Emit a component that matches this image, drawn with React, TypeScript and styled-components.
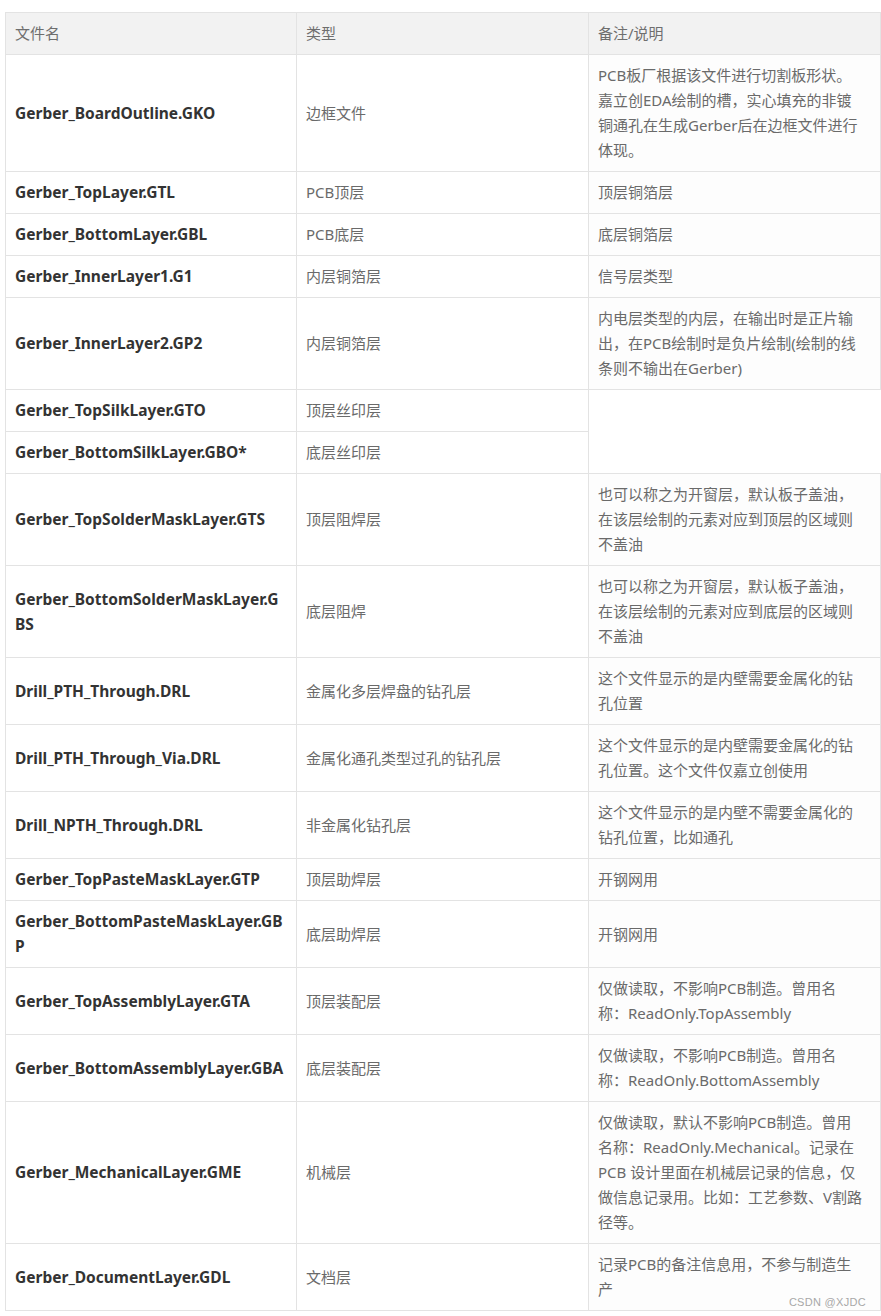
import styled, { createGlobalStyle } from 'styled-components';

const GlobalStyle = createGlobalStyle`
  html, body {
    margin: 0;
    padding: 0;
    background: #ffffff;
  }
  body {
    font-family: "Noto Sans", "Noto Sans CJK SC", sans-serif;
  }
`;

const Page = styled.div`
  position: relative;
  width: 881px;
  padding: 12px 0 4px 5px;
  box-sizing: border-box;
`;

const Table = styled.table`
  width: 875px;
  table-layout: fixed;
  border-collapse: collapse;
`;

const Cell = styled.td`
  border: 1px solid #e3e3e3;
  padding: 8px 9px;
  font-size: 15px;
  line-height: 25px;
  color: #6a6a6a;
  vertical-align: middle;
  text-align: left;
  word-break: break-all;
`;

const HeadCell = styled(Cell).attrs({ as: 'th' })`
  background: #f2f2f2;
  font-weight: normal;
  color: #6e6e6e;
`;

const NameCell = styled(Cell)`
  font-size: 15.5px;
  font-weight: 700;
  color: #333333;
`;

const NoteCell = styled(Cell)`
  background: #fdfdfd;
`;

const Watermark = styled.span`
  position: absolute;
  right: 15px;
  bottom: 7px;
  font-size: 11px;
  letter-spacing: 0.3px;
  color: #a8a8a8;
  font-family: "Liberation Sans", "Noto Sans CJK SC", sans-serif;
`;

type Row = { name: string; type: string; note?: string[] };

const rows: Row[] = [
  {
    name: 'Gerber_BoardOutline.GKO',
    type: '边框文件',
    note: ['PCB板厂根据该文件进行切割板形状。', '嘉立创EDA绘制的槽，实心填充的非镀', '铜通孔在生成Gerber后在边框文件进行', '体现。'],
  },
  { name: 'Gerber_TopLayer.GTL', type: 'PCB顶层', note: ['顶层铜箔层'] },
  { name: 'Gerber_BottomLayer.GBL', type: 'PCB底层', note: ['底层铜箔层'] },
  { name: 'Gerber_InnerLayer1.G1', type: '内层铜箔层', note: ['信号层类型'] },
  {
    name: 'Gerber_InnerLayer2.GP2',
    type: '内层铜箔层',
    note: ['内电层类型的内层，在输出时是正片输', '出，在PCB绘制时是负片绘制(绘制的线', '条则不输出在Gerber)'],
  },
  { name: 'Gerber_TopSilkLayer.GTO', type: '顶层丝印层' },
  { name: 'Gerber_BottomSilkLayer.GBO*', type: '底层丝印层' },
  {
    name: 'Gerber_TopSolderMaskLayer.GTS',
    type: '顶层阻焊层',
    note: ['也可以称之为开窗层，默认板子盖油，', '在该层绘制的元素对应到顶层的区域则', '不盖油'],
  },
  {
    name: 'Gerber_BottomSolderMaskLayer.GBS',
    type: '底层阻焊',
    note: ['也可以称之为开窗层，默认板子盖油，', '在该层绘制的元素对应到底层的区域则', '不盖油'],
  },
  {
    name: 'Drill_PTH_Through.DRL',
    type: '金属化多层焊盘的钻孔层',
    note: ['这个文件显示的是内壁需要金属化的钻', '孔位置'],
  },
  {
    name: 'Drill_PTH_Through_Via.DRL',
    type: '金属化通孔类型过孔的钻孔层',
    note: ['这个文件显示的是内壁需要金属化的钻', '孔位置。这个文件仅嘉立创使用'],
  },
  {
    name: 'Drill_NPTH_Through.DRL',
    type: '非金属化钻孔层',
    note: ['这个文件显示的是内壁不需要金属化的', '钻孔位置，比如通孔'],
  },
  { name: 'Gerber_TopPasteMaskLayer.GTP', type: '顶层助焊层', note: ['开钢网用'] },
  { name: 'Gerber_BottomPasteMaskLayer.GBP', type: '底层助焊层', note: ['开钢网用'] },
  {
    name: 'Gerber_TopAssemblyLayer.GTA',
    type: '顶层装配层',
    note: ['仅做读取，不影响PCB制造。曾用名', '称：ReadOnly.TopAssembly'],
  },
  {
    name: 'Gerber_BottomAssemblyLayer.GBA',
    type: '底层装配层',
    note: ['仅做读取，不影响PCB制造。曾用名', '称：ReadOnly.BottomAssembly'],
  },
  {
    name: 'Gerber_MechanicalLayer.GME',
    type: '机械层',
    note: [
      '仅做读取，默认不影响PCB制造。曾用',
      '名称：ReadOnly.Mechanical。记录在',
      'PCB 设计里面在机械层记录的信息，仅',
      '做信息记录用。比如：工艺参数、V割路',
      '径等。',
    ],
  },
  {
    name: 'Gerber_DocumentLayer.GDL',
    type: '文档层',
    note: ['记录PCB的备注信息用，不参与制造生', '产'],
  },
];

export default function App() {
  return (
    <>
      <GlobalStyle />
      <Page>
        <Table>
          <colgroup>
            <col style={{ width: 291 }} />
            <col style={{ width: 292 }} />
            <col style={{ width: 292 }} />
          </colgroup>
          <thead>
            <tr>
              <HeadCell>文件名</HeadCell>
              <HeadCell>类型</HeadCell>
              <HeadCell>备注/说明</HeadCell>
            </tr>
          </thead>
          <tbody>
            {rows.map(row => (
              <tr key={row.name}>
                <NameCell>{row.name}</NameCell>
                <Cell>{row.type}</Cell>
                {row.note && (
                  <NoteCell>
                    {row.note.map((line, i) => (
                      <span key={i}>
                        {i > 0 && <br />}
                        {line}
                      </span>
                    ))}
                  </NoteCell>
                )}
              </tr>
            ))}
          </tbody>
        </Table>
        <Watermark>CSDN @XJDC</Watermark>
      </Page>
    </>
  );
}
